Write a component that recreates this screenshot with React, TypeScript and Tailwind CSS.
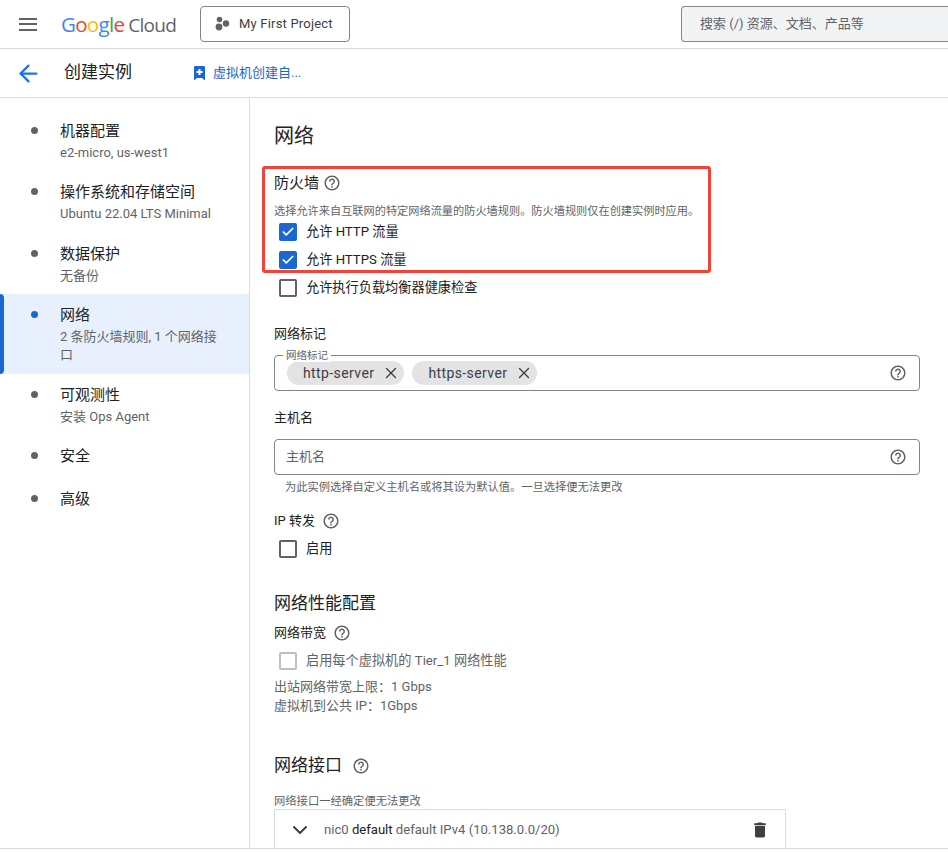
import React from "react";
import { ArrowLeft, ChevronDown, Check, X } from "lucide-react";

const font = "font-['Roboto','Noto_Sans_CJK_SC',sans-serif]";

function Help({ className = "" }: { className?: string }) {
  return (
    <svg viewBox="0 0 24 24" className={`h-[18px] w-[18px] shrink-0 fill-[#5f6368] ${className}`}>
      <path d="M11 18h2v-2h-2v2zm1-16C6.48 2 2 6.48 2 12s4.48 10 10 10 10-4.48 10-10S17.52 2 12 2zm0 18c-4.41 0-8-3.59-8-8s3.59-8 8-8 8 3.59 8 8-3.59 8-8 8zm0-14c-2.21 0-4 1.79-4 4h2c0-1.1.9-2 2-2s2 .9 2 2c0 2-3 1.75-3 5h2c0-2.25 3-2.5 3-5 0-2.21-1.79-4-4-4z" />
    </svg>
  );
}

function CheckRow({
  label,
  checked = false,
  disabled = false,
  className = "",
}: {
  label: string;
  checked?: boolean;
  disabled?: boolean;
  className?: string;
}) {
  return (
    <div className={`ml-[5px] flex h-7 items-center gap-[9px] ${className}`}>
      {checked ? (
        <span className="flex h-[18px] w-[18px] items-center justify-center rounded-[2px] bg-[#1a67d2]">
          <Check className="h-[14px] w-[14px] text-white" strokeWidth={3} />
        </span>
      ) : (
        <span
          className={`h-[18px] w-[18px] rounded-[2px] border-2 ${
            disabled ? "border-[#bdc1c6]" : "border-[#5f6368]"
          }`}
        />
      )}
      <span className={`text-[13.2px] ${disabled ? "text-[#5f6368]" : "text-[#202124]"}`}>{label}</span>
    </div>
  );
}

function Chip({ label }: { label: string }) {
  return (
    <span className="flex h-6 items-center rounded-xl bg-[#e3e3e3] pl-4 pr-[4px] text-[14px] tracking-[0.4px] text-[#3c4043]">
      {label}
      <X className="ml-[8px] h-[18px] w-[18px] text-[#3c4043]" strokeWidth={1.8} />
    </span>
  );
}

const navItems = [
  { title: "机器配置", sub: ["e2-micro, us-west1"], h: "h-[61px]" },
  { title: "操作系统和存储空间", sub: ["Ubuntu 22.04 LTS Minimal"], h: "h-[62px]" },
  { title: "数据保护", sub: ["无备份"], h: "h-[61px]" },
  { title: "网络", sub: ["2 条防火墙规则, 1 个网络接", "口"], h: "h-[80px]", active: true },
  { title: "可观测性", sub: ["安装 Ops Agent"], h: "h-[61px]" },
  { title: "安全", sub: [], h: "h-[43px]" },
  { title: "高级", sub: [], h: "h-[43px]" },
];

export default function App() {
  return (
    <div className={`${font} flex h-[852px] w-[948px] flex-col overflow-hidden bg-white text-[#202124]`}>
      {/* top bar */}
      <header className="flex h-[49px] shrink-0 items-center border-b border-[#dadce0]">
        <div className="ml-[19px] flex w-[18px] flex-col gap-[3.5px]">
          <span className="h-[2px] bg-[#5f6368]" />
          <span className="h-[2px] bg-[#5f6368]" />
          <span className="h-[2px] bg-[#5f6368]" />
        </div>
        <div className="ml-[24px] flex w-[120px] items-baseline font-['Open_Sans',sans-serif] text-[20.5px] tracking-[-0.7px]">
          <span className="font-medium text-[#4285f4]">G</span>
          <span className="font-medium text-[#ea4335]">o</span>
          <span className="font-medium text-[#fbbc04]">o</span>
          <span className="font-medium text-[#4285f4]">g</span>
          <span className="font-medium text-[#34a853]">l</span>
          <span className="font-medium text-[#ea4335]">e</span>
          <span className="ml-[4px] text-[19px] text-[#5f6368]">Cloud</span>
        </div>
        <div className="ml-[19px] flex h-9 w-[150px] items-center rounded-[4px] border border-[#80868b] pl-[14px]">
          <svg viewBox="0 0 16 16" className="h-[16px] w-[16px] fill-[#5f6368]">
            <circle cx="4.5" cy="3.5" r="2.8" />
            <circle cx="4" cy="11" r="3.4" />
            <circle cx="11" cy="7.5" r="3.2" />
          </svg>
          <span className="ml-[8px] text-[13px] tracking-[0.2px] text-[#3c4043]">My First Project</span>
        </div>
        <div className="ml-auto flex h-9 w-[267px] items-center rounded-l-[4px] border border-r-0 border-[#80868b] bg-[#f1f3f4] pl-[18px] text-[13px] text-[#5f6368]">
          搜索 (/) 资源、文档、产品等
        </div>
      </header>

      {/* page title bar */}
      <div className="flex h-[49px] shrink-0 items-center border-b border-[#dadce0]">
        <ArrowLeft className="ml-[14.5px] h-[27px] w-[27px] text-[#1a73e8]" strokeWidth={2} />
        <h1 className="ml-[22.5px] text-[17px] text-[#202124]">创建实例</h1>
        <svg viewBox="0 0 11 14" className="ml-[62px] h-[14px] w-[11px] fill-[#1a67d2]">
          <path d="M1 0h9a1 1 0 0 1 1 1v12.5a.5.5 0 0 1-.8.4L8 12H3l-2.2 1.9a.5.5 0 0 1-.8-.4V1a1 1 0 0 1 1-1z" />
          <path d="M4.5 3h2v2h2v2h-2v2h-2V7h-2V5h2z" fill="#fff" />
        </svg>
        <span className="ml-[8px] text-[13px] text-[#1a67d2]">虚拟机创建自...</span>
      </div>

      <div className="flex h-[751px] shrink-0 overflow-hidden border-b border-[#dadce0]">
        {/* sidebar */}
        <nav className="w-[250px] shrink-0 border-r border-[#dadce0] pt-[12px]">
          {navItems.map((item) => (
            <div
              key={item.title}
              className={`relative flex ${item.h} pl-[31px] ${item.active ? "bg-[#e8f0fe]" : ""}`}
            >
              {item.active && <span className="absolute inset-y-0 left-0 w-1 rounded-r-sm bg-[#1a67d2]" />}
              <span
                className={`mt-[17px] h-[7px] w-[7px] shrink-0 rounded-full ${
                  item.active ? "bg-[#1a67d2]" : "bg-[#5f6368]"
                }`}
              />
              <div className="ml-[22px] pt-[11px]">
                <div className="flex h-[20px] items-center text-[15px] leading-none text-[#202124]">{item.title}</div>
                <div className="mt-[2.5px] text-[13px] leading-[18px] text-[#5f6368]">
                  {item.sub.map((s) => (
                    <div key={s}>{s}</div>
                  ))}
                </div>
              </div>
            </div>
          ))}
        </nav>

        {/* main */}
        <main className="relative min-w-0 flex-1 overflow-hidden pl-[24px] pr-[28px]">
          <h2 className="mt-[24px] text-[20px] leading-[28px] text-[#202124]">网络</h2>

          <div className="mt-[21px] flex h-[24px] items-center gap-[4px] text-[15px]">
            防火墙 <Help />
          </div>
          <p className="mt-[9px] text-[11.2px] leading-[16px] text-[#5f6368]">
            选择允许来自互联网的特定网络流量的防火墙规则。防火墙规则仅在创建实例时应用。
          </p>
          <CheckRow label="允许 HTTP 流量" checked className="-mt-[2px]" />
          <CheckRow label="允许 HTTPS 流量" checked />
          <CheckRow label="允许执行负载均衡器健康检查" />

          {/* annotation */}
          <div className="pointer-events-none absolute left-[12px] top-[68px] h-[107px] w-[449px] rounded-[3px] border-[3px] border-[#f44336]" />

          <div className="mt-[23px] text-[13px] leading-[18px]">网络标记</div>
          <div className="relative mt-[12px] flex h-9 items-center gap-2 rounded-[4px] border border-[#80868b] px-[12px]">
            <span className="absolute -top-[7px] left-[8px] bg-white px-[3px] text-[10.5px] leading-[13px] text-[#5f6368]">
              网络标记
            </span>
            <Chip label="http-server" />
            <Chip label="https-server" />
            <Help className="ml-auto" />
          </div>

          <div className="mt-[18px] text-[13px] leading-[18px]">主机名</div>
          <div className="mt-[12px] flex h-9 items-center rounded-[4px] border border-[#80868b] pl-[11px] pr-[12px] text-[13px] text-[#5f6368]">
            主机名
            <Help className="ml-auto" />
          </div>
          <p className="ml-[11px] mt-[5px] text-[11.25px] leading-[16px] text-[#5f6368]">
            为此实例选择自定义主机名或将其设为默认值。一旦选择便无法更改
          </p>

          <div className="mt-[15px] flex h-[20px] items-center gap-[7px] text-[13px]">
            IP 转发 <Help />
          </div>
          <CheckRow label="启用" className="mt-[4px]" />

          <h3 className="mt-[28px] text-[17px] leading-[24px]">网络性能配置</h3>
          <div className="mt-[8px] flex h-[20px] items-center gap-[7px] text-[13px]">
            网络带宽 <Help />
          </div>
          <CheckRow label="启用每个虚拟机的 Tier_1 网络性能" disabled className="mt-[4px]" />
          <div className="mt-[2px] text-[13px] leading-[19px] text-[#5f6368]">
            <div>出站网络带宽上限：1 Gbps</div>
            <div>虚拟机到公共 IP：1Gbps</div>
          </div>

          <div className="mt-[38px] flex h-[26px] items-center gap-[10px] text-[17px]">
            网络接口 <Help />
          </div>
          <p className="mt-[15px] text-[11.3px] leading-[16px] text-[#5f6368]">网络接口一经确定便无法更改</p>
          <div className="-mt-[1px] flex h-[42px] w-[512px] items-center border border-[#dadce0] pl-[13px] pr-[15px] text-[13.1px] text-[#5f6368]">
            <ChevronDown className="h-6 w-6 text-[#3c4043]" strokeWidth={2} />
            <span className="ml-[12px]">
              nic0 <span className="text-[#202124]">default</span> default IPv4 (10.138.0.0/20)
            </span>
            <svg viewBox="0 0 24 24" className="ml-auto h-5 w-5 fill-[#3c4043]">
              <path d="M6 19c0 1.1.9 2 2 2h8c1.1 0 2-.9 2-2V7H6v12zM19 4h-3.5l-1-1h-5l-1 1H5v2h14V4z" />
            </svg>
          </div>
        </main>
      </div>
    </div>
  );
}
